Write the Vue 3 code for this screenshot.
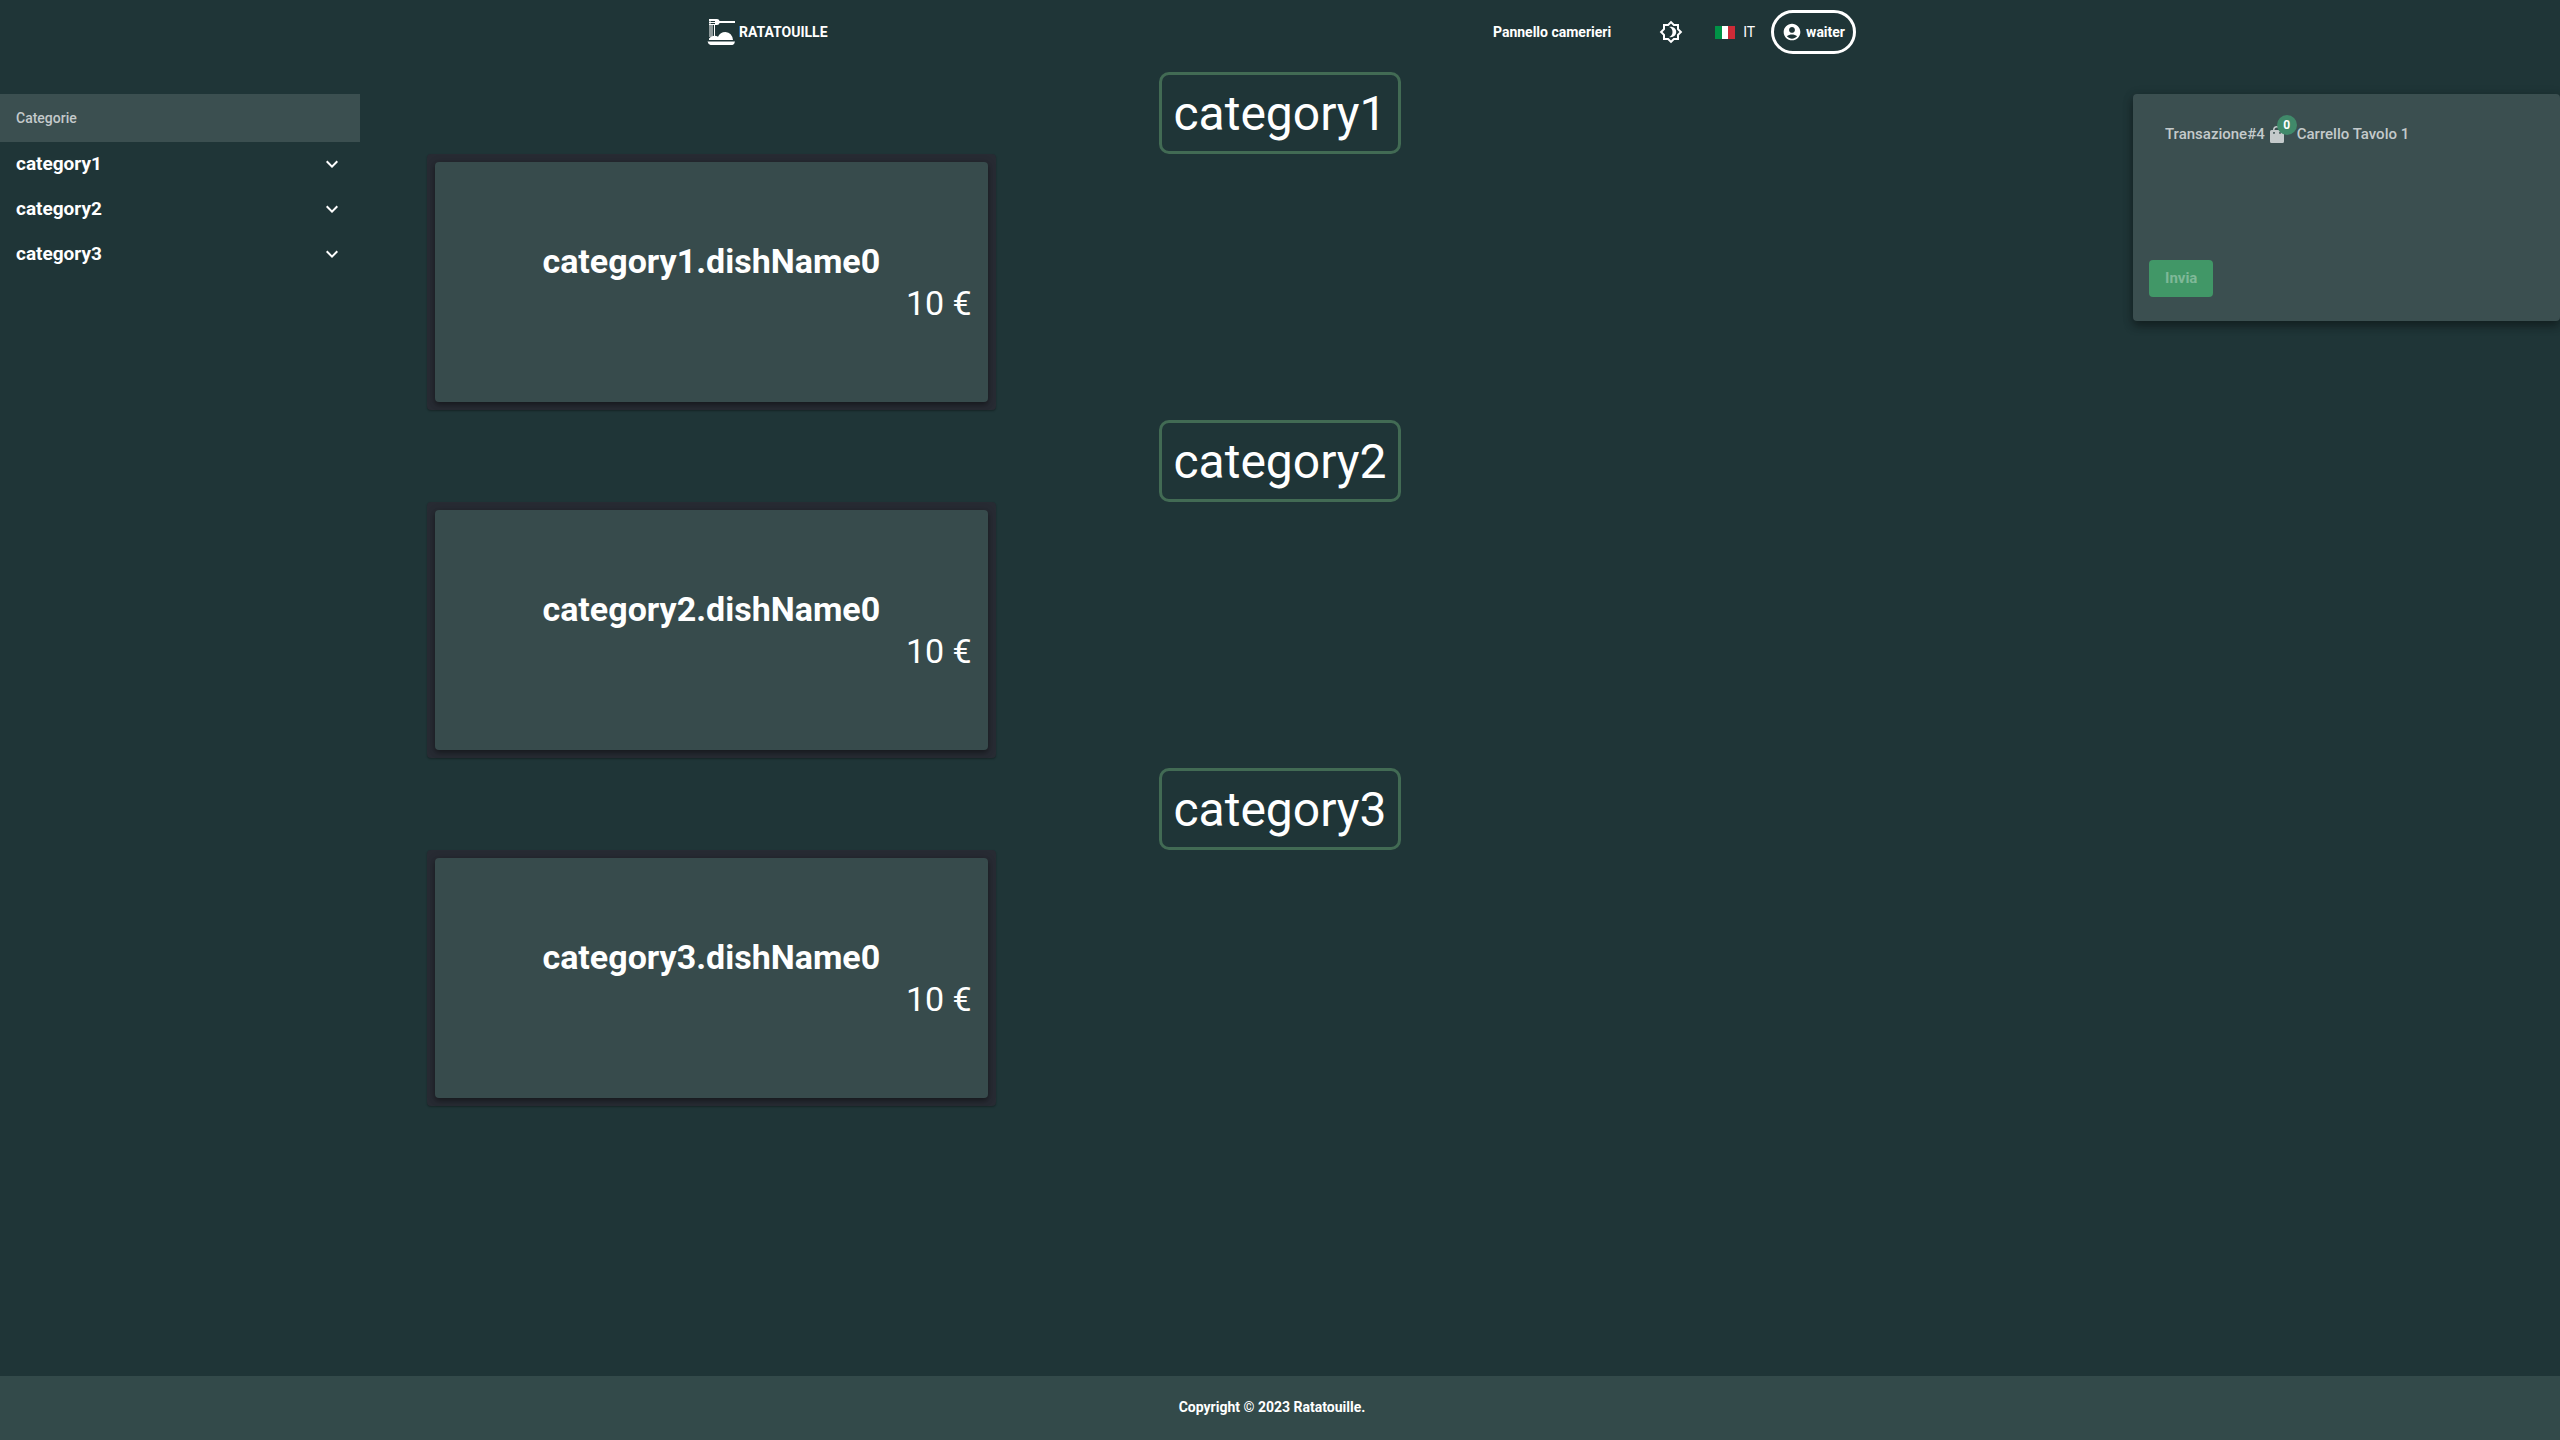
<script setup>
const categories = ['category1', 'category2', 'category3']
</script>

<template>
  <div class="app">
    <header class="bar">
      <a class="brand" href="#">
        <svg viewBox="0 0 28 28" width="28" height="28" fill="currentColor" aria-hidden="true">
          <path d="M2 1h8q2 0 2.600 2H28v2H12.600q-.6 2-2.600 2H2V6h6V5H2V4h6V3H2V2z" />
          <path d="M2.500 1h1v18h-1zM4.500 6h1v13h-1zM7 6h1v13H7z" />
          <path d="M2 22v-1.500q2-2.500 4-2.500 3-.5 5 .8 2-4.800 7.500-4.800 6.500.5 7.500 8zM.5 23.500H28q-.3 2.500-2.500 3.500H3.500Q1 26 .5 23.500z" />
        </svg>
        <span>RATATOUILLE</span>
      </a>
      <nav class="tools">
        <a class="panel" href="#">Pannello camerieri</a>
        <button class="icon" type="button" aria-label="Tema">
          <svg viewBox="0 0 24 24" width="24" height="24" fill="currentColor" aria-hidden="true">
            <path d="M20 8.690V4h-4.690L12 .69 8.690 4H4v4.690L.69 12 4 15.310V20h4.690L12 23.310 15.310 20H20v-4.690L23.310 12 20 8.690zm-2 5.790V18h-3.520L12 20.480 9.520 18H6v-3.520L3.520 12 6 9.520V6h3.520L12 3.520 14.480 6H18v3.520L20.480 12 18 14.480zM10.200 7c2.200.8 3.300 2.600 3.300 5s-1.100 4.200-3.300 5c3.700.9 7-1.500 7-5s-3.300-5.900-7-5z" />
          </svg>
        </button>
        <button class="lang" type="button">
          <svg viewBox="0 0 20 13" width="20" height="13" aria-hidden="true">
            <path fill="#009246" d="M0 0h7v13H0z" /><path fill="#fff" d="M7 0h6v13H7z" /><path fill="#ce2b37" d="M13 0h7v13h-7z" />
          </svg>
          <span>IT</span>
        </button>
        <button class="user" type="button">
          <svg viewBox="0 0 24 24" width="20" height="20" fill="currentColor" aria-hidden="true">
            <path d="M12 2C6.480 2 2 6.480 2 12s4.480 10 10 10 10-4.480 10-10S17.520 2 12 2zm0 4c1.930 0 3.500 1.570 3.500 3.500S13.930 13 12 13s-3.500-1.570-3.500-3.500S10.070 6 12 6zm0 14c-2.030 0-4.430-.82-6.140-2.880C7.550 15.800 9.680 15 12 15s4.450.8 6.140 2.120C16.430 19.180 14.030 20 12 20z" />
          </svg>
          <span>waiter</span>
        </button>
      </nav>
    </header>

    <div class="body">
      <aside class="side">
        <h2>Categorie</h2>
        <button v-for="c in categories" :key="c" type="button" class="cat">
          <span>{{ c }}</span>
          <svg viewBox="0 0 24 24" width="24" height="24" fill="currentColor" aria-hidden="true">
            <path d="M16.590 8.590L12 13.170 7.410 8.590 6 10l6 6 6-6z" />
          </svg>
        </button>
      </aside>

      <main class="menu">
        <section v-for="c in categories" :key="c">
          <h1>{{ c }}</h1>
          <div class="dishes">
            <div class="frame">
              <article class="dish">
                <h3>{{ c }}.dishName0</h3>
                <p>10 €</p>
              </article>
            </div>
          </div>
        </section>
      </main>

      <aside class="cart">
        <div class="cart-title">
          <span>Transazione#4</span>
          <span class="bag">
            <svg viewBox="0 0 20 20" width="20" height="20" fill="currentColor" fill-rule="evenodd" aria-hidden="true">
              <path d="M4.500 6H6a4 4 0 0 1 8 0h1.500A1.500 1.500 0 0 1 17 7.500v10a1.500 1.500 0 0 1-1.500 1.500h-11A1.500 1.500 0 0 1 3 17.500v-10A1.500 1.500 0 0 1 4.500 6zM7.500 6h5a2.500 2.500 0 0 0-5 0zM6.200 8v1.200a.8.8 0 0 0 1.600 0V8zM12.200 8v1.200a.8.8 0 0 0 1.600 0V8z" />
            </svg>
            <b>0</b>
          </span>
          <span>Carrello Tavolo 1</span>
        </div>
        <button class="send" type="button" disabled>Invia</button>
      </aside>
    </div>

    <footer class="foot">Copyright © 2023 Ratatouille.</footer>
  </div>
</template>

<style>
body {
  background: #1f3537;
}
</style>

<style scoped>
.app {
  min-height: 100vh;
  display: flex;
  flex-direction: column;
  font-family: Roboto, "Liberation Sans", sans-serif;
  font-size: 14px;
  color: #fff;
}
.app *,
.app {
  box-sizing: border-box;
}
svg {
  display: block;
  flex: none;
}
button {
  font: inherit;
  color: inherit;
  background: none;
  border: 0;
  padding: 0;
}
a {
  color: inherit;
  text-decoration: none;
}
h1,
h2,
h3,
p {
  margin: 0;
}
.bar {
  height: 64px;
  display: flex;
  align-items: center;
  justify-content: space-between;
  width: 45%;
  margin: 0 auto;
  padding-left: 3px;
}
.brand {
  display: flex;
  align-items: center;
  gap: 4px;
  font-weight: 700;
}
.tools {
  display: flex;
  align-items: center;
}
.panel {
  font-weight: 700;
  margin-right: 48px;
}
.lang {
  display: flex;
  align-items: center;
  gap: 8px;
  margin: 0 16px 0 32px;
}
.user {
  display: flex;
  align-items: center;
  gap: 4px;
  height: 44px;
  padding: 0 8px;
  border: 3px solid #fff;
  border-radius: 22px;
  font-weight: 700;
}
.body {
  flex: 1;
  display: grid;
  grid-template-columns: 360px 1fr 427px;
  align-items: start;
}
.side {
  margin-top: 30px;
}
.side h2 {
  height: 48px;
  padding: 0 16px;
  background: #3b4f50;
  color: #c4cacb;
  font-size: 14px;
  font-weight: 500;
  line-height: 48px;
}
.cat {
  width: 100%;
  height: 45px;
  display: flex;
  align-items: center;
  justify-content: space-between;
  padding: 0 16px 2px;
  font-size: 19px;
  font-weight: 700;
}
.menu {
  padding: 8px 0 0 67px;
}
.menu section {
  display: flex;
  flex-direction: column;
  align-items: center;
  margin-bottom: 10px;
}
.menu h1 {
  height: 82px;
  padding: 0 11px;
  border: 3px solid #426b54;
  border-radius: 10px;
  font-size: 48px;
  font-weight: 400;
  line-height: 78px;
}
.dishes {
  width: 100%;
  display: grid;
  grid-template-columns: repeat(3, 1fr);
}
.frame {
  padding: 8px;
  background: #272b33;
  border-radius: 4px;
  box-shadow: 0 1px 2px rgba(0, 0, 0, 0.3);
}
.dish {
  height: 240px;
  display: flex;
  flex-direction: column;
  justify-content: center;
  padding: 0 16px;
  background: #374b4c;
  border-radius: 4px;
  box-shadow: 0 3px 5px rgba(0, 0, 0, 0.3), 0 1px 8px rgba(0, 0, 0, 0.2);
  font-size: 34px;
  line-height: 42px;
}
.dish h3 {
  font-size: 34px;
  font-weight: 700;
  text-align: center;
}
.dish p {
  text-align: right;
}
.cart {
  height: 227px;
  margin-top: 30px;
  padding: 30px 16px 24px;
  display: flex;
  flex-direction: column;
  align-items: flex-start;
  justify-content: space-between;
  background: #3b4f50;
  border-radius: 4px;
  box-shadow: 0 5px 10px rgba(0, 0, 0, 0.35), 0 2px 12px rgba(0, 0, 0, 0.15);
}
.cart-title {
  display: flex;
  align-items: center;
  margin-left: 16px;
  font-size: 15px;
  font-weight: 500;
  line-height: 20px;
  color: #c4cacb;
}
.bag {
  position: relative;
  margin: 0 10px 0 2px;
}
.bag b {
  position: absolute;
  top: -9px;
  left: 10px;
  width: 20px;
  height: 20px;
  border-radius: 10px;
  background: #40896a;
  color: #fff;
  font-size: 12px;
  line-height: 20px;
  text-align: center;
}
.send {
  height: 37px;
  padding: 0 16px 2px;
  border-radius: 4px;
  background: #419767;
  color: #7fb898;
  font-size: 15px;
  font-weight: 700;
}
.foot {
  height: 64px;
  padding-right: 16px;
  background: #334a4a;
  font-weight: 700;
  line-height: 62px;
  text-align: center;
}
</style>
